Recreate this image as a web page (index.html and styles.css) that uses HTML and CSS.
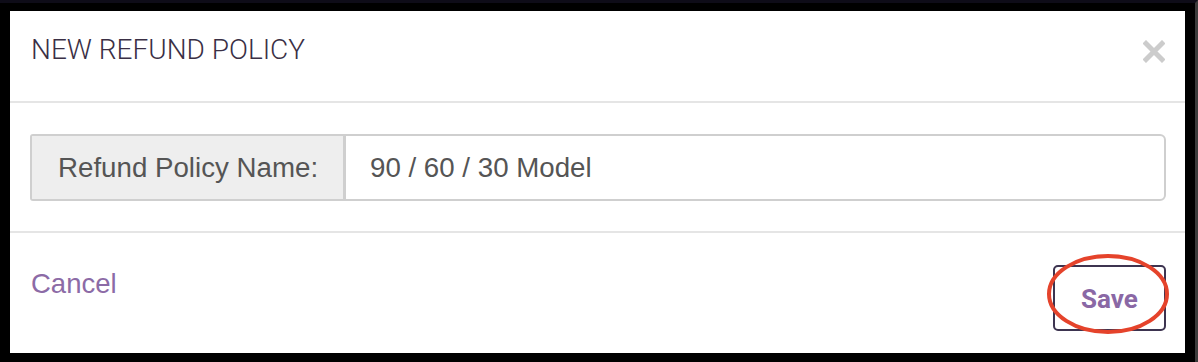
FILE: index.html
```html
<!doctype html>
<html lang="en">
<head>
    <meta charset="UTF-8">
    <title>New Refund Policy</title>
    <link rel="stylesheet" href="styles.css">
</head>
<body>
    <div class="screen">
        <div class="modal">
            <div class="modal-header">
                <div class="modal-title">NEW REFUND POLICY</div>
                <svg class="close" width="22" height="23" viewBox="0 0 22 23">
                    <path d="M3 3.5 L19 19.5 M19 3.5 L3 19.5" stroke="#cccccc" stroke-width="5" stroke-linecap="square"/>
                </svg>
            </div>
            <div class="modal-body">
                <div class="input-group">
                    <span class="addon">Refund Policy Name:</span>
                    <span class="field">90 / 60 / 30 Model</span>
                </div>
            </div>
            <div class="modal-footer">
                <a class="cancel">Cancel</a>
                <div class="save-wrap">
                    <div class="btn-save">Save</div>
                    <svg class="mark" width="124" height="82" viewBox="0 0 124 82">
                        <ellipse cx="62" cy="41" rx="59" ry="38" fill="none" stroke="#e5432b" stroke-width="4"/>
                    </svg>
                </div>
            </div>
        </div>
    </div>
</body>
</html>
```

FILE: styles.css
```css
*{padding: 0;margin: 0;box-sizing: border-box}
body{
    background: #000;
    width: 1198px;
    height: 362px;
    overflow: hidden;
}
.screen{
    width: 1198px;
    height: 362px;
    padding: 8px 0 0 10px;
    background: #000;
    border-top: 3px solid #0e0c18;
    border-right: 3px solid #3c3c3c;
}
.modal{
    width: 1175px;
    height: 342px;
    background: #fff;
}
.modal-header{
    height: 92px;
    padding: 23px 20px 0 21px;
    border-bottom: 2px solid #e5e5e5;
    display: flex;
    justify-content: space-between;
    align-items: flex-start;
}
.modal-title{
    font-family: Roboto, "Liberation Sans", sans-serif;
    font-weight: 300;
    font-size: 28px;
    line-height: 32px;
    color: #3a2f45;
}
.close{
    margin-top: 6px;
}
.modal-body{
    padding: 31px 19px 30px 20px;
    border-bottom: 2px solid #e5e5e5;
}
.input-group{
    display: flex;
    height: 67px;
    border: 2px solid #cfcfcf;
    border-radius: 3px 6px 6px 3px;
    font-family: "Liberation Sans", Arial, sans-serif;
    font-size: 27.7px;
    color: #555;
}
.input-group .addon{
    display: flex;
    align-items: center;
    width: 314px;
    padding-left: 26px;
    padding-top: 1px;
    background: #eeeeee;
    border-right: 3px solid #cfcfcf;
}
.input-group .field{
    display: flex;
    align-items: center;
    padding-left: 24px;
    padding-top: 1px;
}
.modal-footer{
    height: 119px;
    padding: 0 19px 0 21px;
    display: flex;
    justify-content: space-between;
    align-items: flex-start;
}
.cancel{
    margin-top: 35px;
    font-family: "Liberation Sans", Arial, sans-serif;
    font-size: 27.5px;
    color: #8c6ba6;
    cursor: pointer;
}
.save-wrap{
    position: relative;
    margin-top: 32px;
}
.btn-save{
    width: 113px;
    height: 66px;
    border: 2px solid #3d3450;
    border-radius: 5px;
    display: flex;
    align-items: center;
    justify-content: center;
    padding-top: 1px;
    font-family: Roboto, "Liberation Sans", sans-serif;
    font-weight: 700;
    font-size: 26px;
    color: #8a68a5;
}
.mark{
    position: absolute;
    left: -7px;
    top: -12px;
}
```
